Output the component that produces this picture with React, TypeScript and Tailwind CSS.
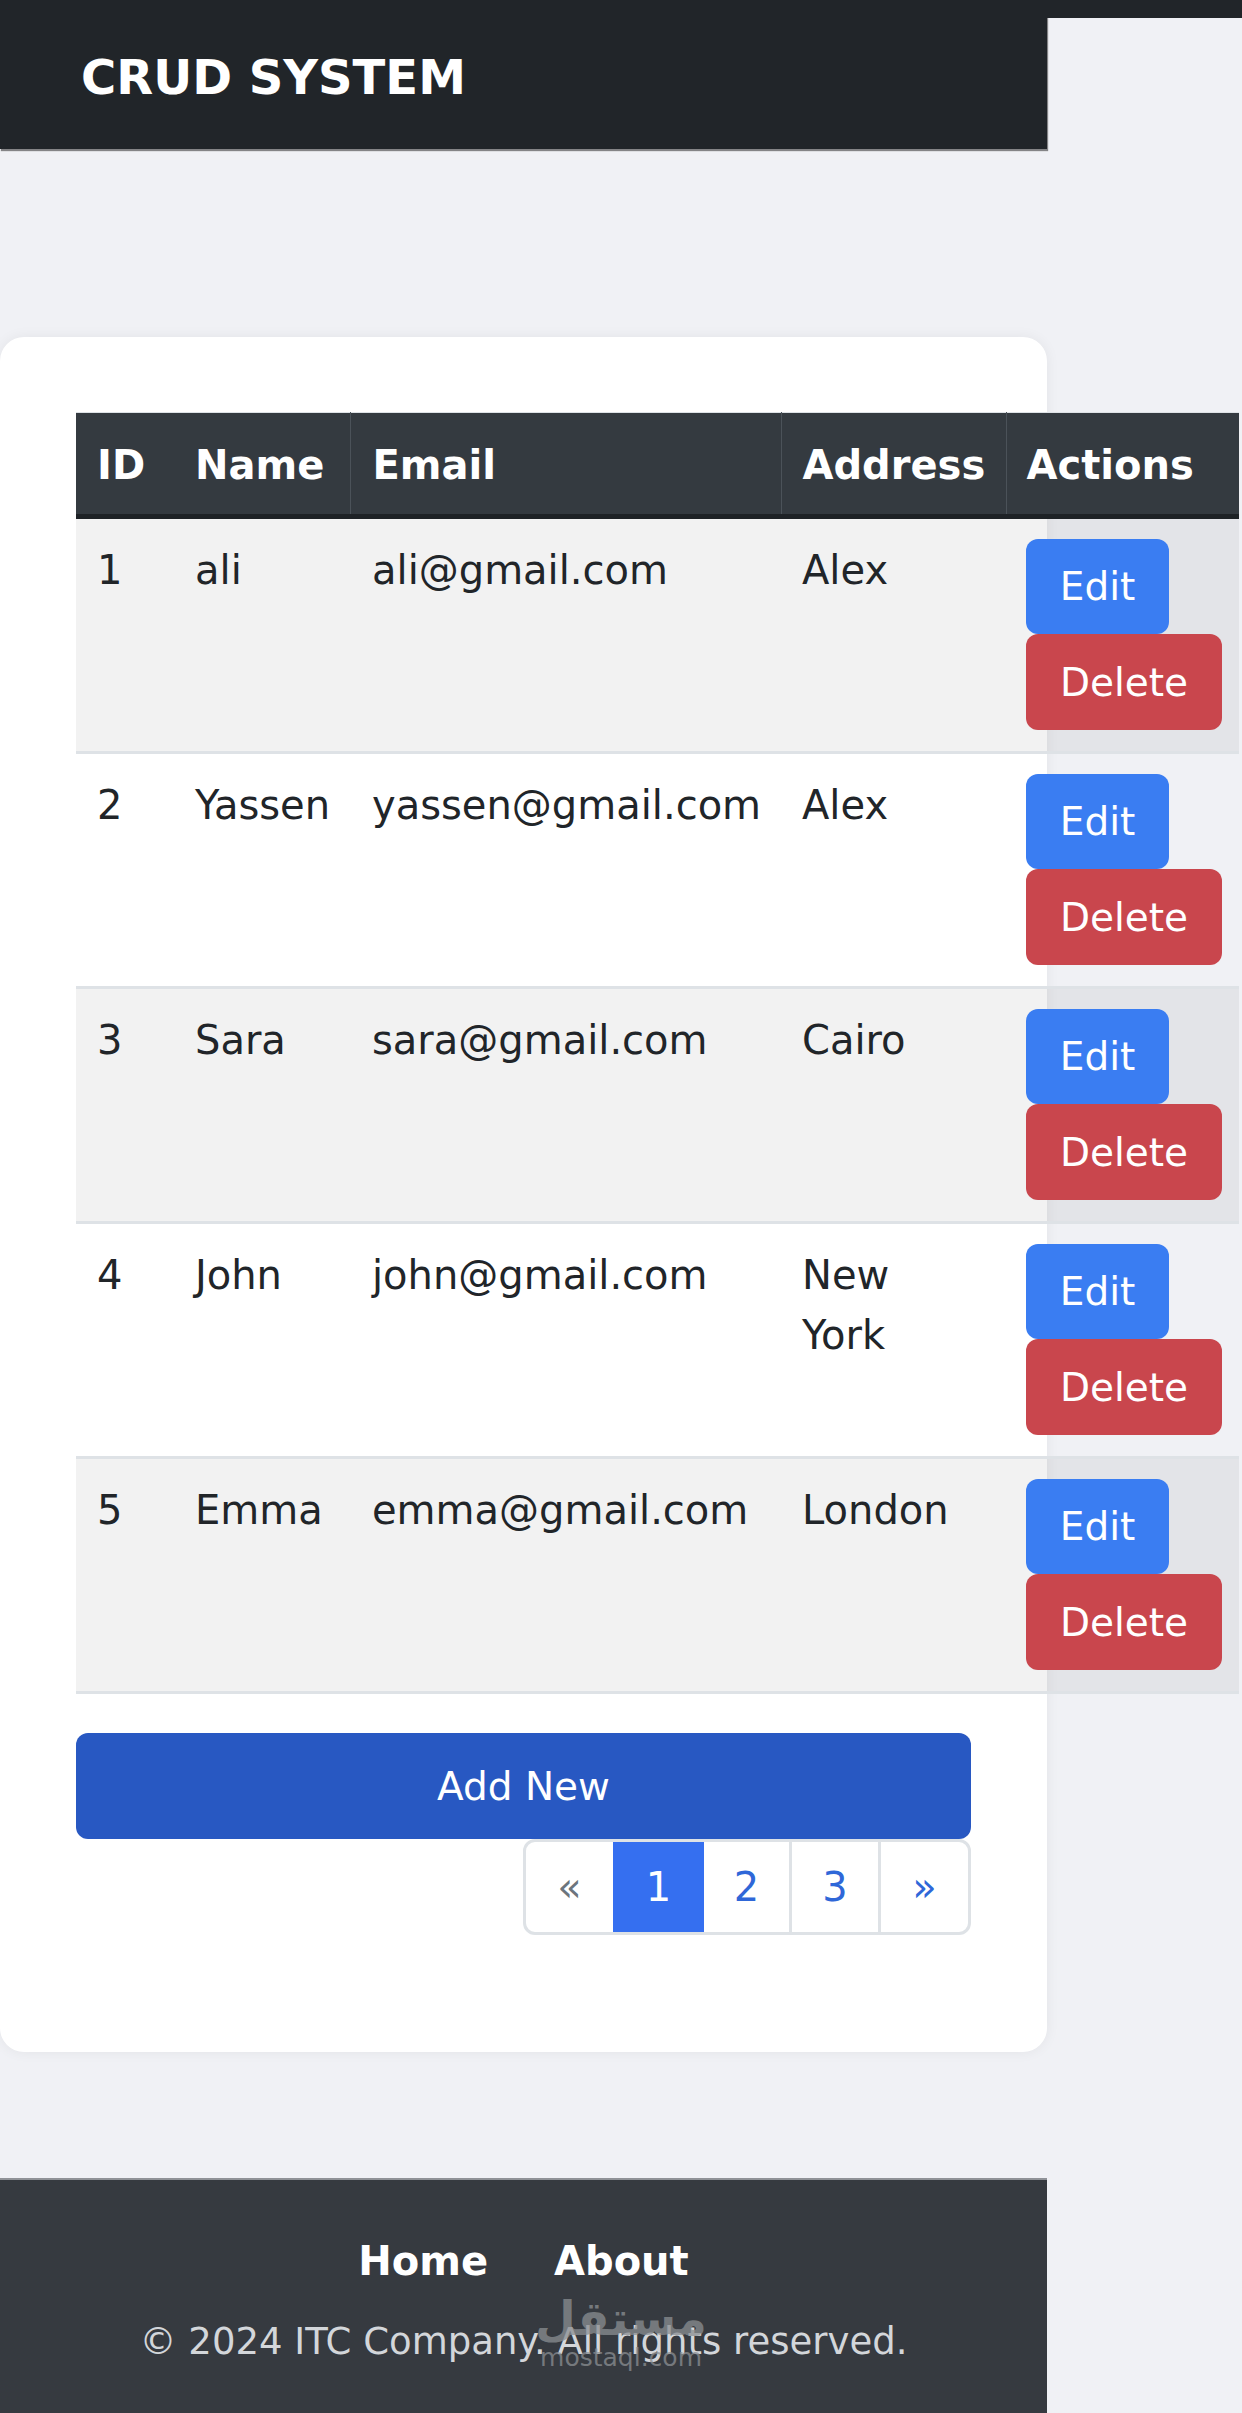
import React from "react";

const rows = [
  { id: 1, name: "ali", email: "ali@gmail.com", address: "Alex" },
  { id: 2, name: "Yassen", email: "yassen@gmail.com", address: "Alex" },
  { id: 3, name: "Sara", email: "sara@gmail.com", address: "Cairo" },
  { id: 4, name: "John", email: "john@gmail.com", address: "New York" },
  { id: 5, name: "Emma", email: "emma@gmail.com", address: "London" },
];

export default function App() {
  return (
    <div className="min-h-screen w-[1242px] bg-[#f0f1f5] font-['DejaVu_Sans',Verdana,sans-serif] text-[#212529]">
      {/* top bar */}
      <div className="flex">
        <header className="w-[1047px] h-[149px] shrink-0 bg-[#212529] pl-[81px] pt-[48px] shadow-[1px_2px_1px_rgba(0,0,0,0.45)]">
          <h1 className="text-[48px] font-bold leading-[58px] text-white">CRUD SYSTEM</h1>
        </header>
        <div className="flex-1">
          <div className="h-[18px] bg-[#212529]" />
        </div>
      </div>

      {/* card */}
      <main className="mt-[188px] w-[1047px] rounded-[24px] bg-white pt-[75px] pb-[117px] px-[76px] shadow-[0_0_14px_rgba(0,0,0,0.06)]">
        <table className="w-[1163px] table-fixed border-collapse border-t border-[#dee2e6]">
          <colgroup>
            <col className="w-[98px]" />
            <col className="w-[176px]" />
            <col className="w-[431px]" />
            <col className="w-[225px]" />
            <col className="w-[233px]" />
          </colgroup>
          <thead>
            <tr className="bg-[#343a40] text-white">
              <th className="whitespace-nowrap border-b-[5px] border-[#1e2226] pl-[21px] pr-[10px] pt-[22px] pb-[19px] text-left text-[40px] font-bold leading-[60px]">ID</th>
              <th className="whitespace-nowrap border-b-[5px] border-[#1e2226] px-[21px] pt-[22px] pb-[19px] text-left text-[40px] font-bold leading-[60px]">Name</th>
              <th className="whitespace-nowrap border-b-[5px] border-l border-l-[#4b5259] border-b-[#1e2226] px-[22px] pt-[22px] pb-[19px] text-left text-[40px] font-bold leading-[60px]">Email</th>
              <th className="whitespace-nowrap border-b-[5px] border-l border-l-[#4b5259] border-b-[#1e2226] px-[21px] pt-[22px] pb-[19px] text-left text-[40px] font-bold leading-[60px]">Address</th>
              <th className="whitespace-nowrap border-b-[5px] border-l border-l-[#4b5259] border-b-[#1e2226] px-[20px] pt-[22px] pb-[19px] text-left text-[40px] font-bold leading-[60px]">Actions</th>
            </tr>
          </thead>
          <tbody>
            {rows.map((r, i) => (
              <tr key={r.id} className={i % 2 === 0 ? "bg-black/5" : "bg-transparent"}>
                <td className="whitespace-nowrap border-b-[3px] border-[#dee2e6] pl-[21px] pr-[8px] pt-[21px] pb-[21px] align-top text-[40px] leading-[60px]">{r.id}</td>
                <td className="whitespace-nowrap border-b-[3px] border-[#dee2e6] px-[21px] pt-[21px] pb-[21px] align-top text-[40px] leading-[60px]">{r.name}</td>
                <td className="whitespace-nowrap border-b-[3px] border-[#dee2e6] px-[22px] pt-[21px] pb-[21px] align-top text-[40px] leading-[60px]">{r.email}</td>
                <td className="border-b-[3px] border-[#dee2e6] px-[21px] pt-[21px] pb-[21px] align-top text-[40px] leading-[60px]">{r.address}</td>
                <td className="border-b-[3px] border-[#dee2e6] pl-[20px] pt-[20px] pb-[21px] align-top">
                  <div className="flex flex-col items-start">
                    <button className="flex h-[95px] w-[143px] items-center justify-center rounded-[12px] bg-[#3a7df2] text-[39px] leading-none text-white">Edit</button>
                    <button className="flex h-[96px] w-[196px] items-center justify-center rounded-[12px] bg-[#c9464d] text-[39px] leading-none text-white">Delete</button>
                  </div>
                </td>
              </tr>
            ))}
          </tbody>
        </table>

        <button className="mt-[39px] flex h-[106px] w-full items-center justify-center rounded-[12px] bg-[#2858c2] text-[39px] leading-none text-white">
          Add New
        </button>

        <div className="flex justify-end">
          <nav className="flex h-[96px] overflow-hidden rounded-[12px] border-[3px] border-[#dee2e6]">
            <span className="flex w-[87px] items-center justify-center text-[40px] text-[#6c757d]">«</span>
            <span className="flex w-[91px] items-center justify-center bg-[#356ff0] text-[40px] text-white">1</span>
            <span className="flex w-[88px] items-center justify-center border-r-[3px] border-[#dee2e6] text-[40px] text-[#2f67d8]">2</span>
            <span className="flex w-[89px] items-center justify-center border-r-[3px] border-[#dee2e6] text-[40px] text-[#2f67d8]">3</span>
            <span className="flex w-[87px] items-center justify-center text-[40px] text-[#2f67d8]">»</span>
          </nav>
        </div>
      </main>

      {/* footer */}
      <footer className="relative mt-[126px] h-[237px] w-[1047px] border-t-2 border-[#8f9297] bg-[#363a40] pt-[51px] text-center">
        <div className="flex justify-center gap-[66px]">
          <a className="text-[40px] font-bold leading-[60px] text-white">Home</a>
          <a className="text-[40px] font-bold leading-[60px] text-white">About</a>
        </div>
        <p className="mt-[23px] text-[37px] leading-[55px] text-[#d3d6da]">© 2024 ITC Company. All rights reserved.</p>
        <div className="pointer-events-none absolute left-[546px] top-[110px] flex w-[150px] flex-col items-center text-[#8b8e92] opacity-75">
          <span className="text-[47px] font-bold leading-[58px]">مستقل</span>
          <span className="-mt-[4px] text-[25px] leading-[28px]">mostaql.com</span>
        </div>
      </footer>
    </div>
  );
}
